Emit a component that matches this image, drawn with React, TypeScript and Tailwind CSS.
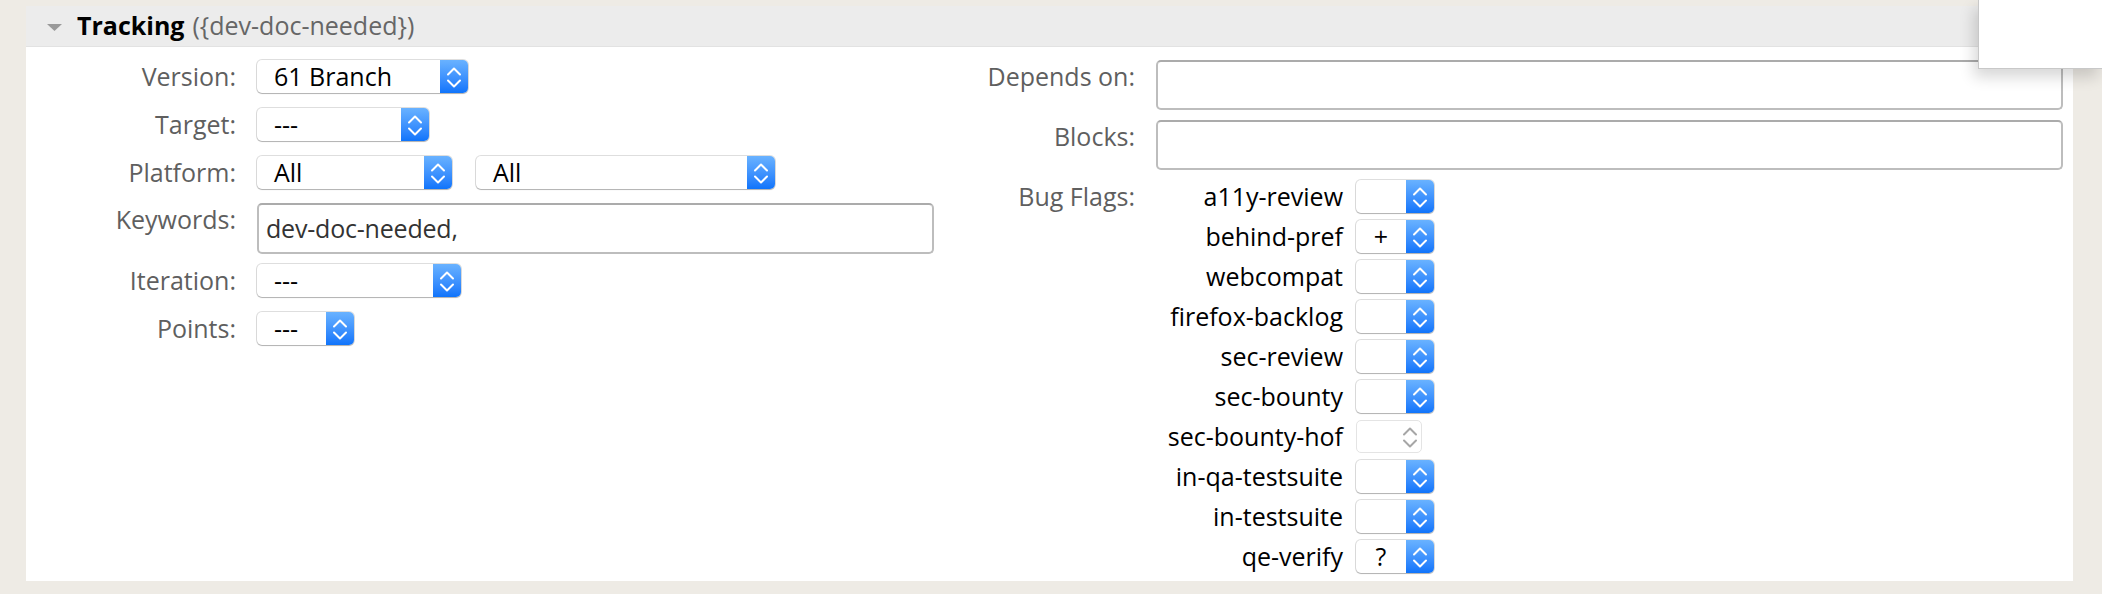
import clsx from "clsx";

type Flag = { name: string; value?: string; disabled?: boolean };

const bugFlags: Flag[] = [
  { name: "a11y-review" },
  { name: "behind-pref", value: "+" },
  { name: "webcompat" },
  { name: "firefox-backlog" },
  { name: "sec-review" },
  { name: "sec-bounty" },
  { name: "sec-bounty-hof", disabled: true },
  { name: "in-qa-testsuite" },
  { name: "in-testsuite" },
  { name: "qe-verify", value: "?" },
];

function Arrows({ className }: { className?: string }) {
  return (
    <svg
      viewBox="0 0 16 33"
      width="16"
      height="33"
      fill="none"
      stroke="currentColor"
      strokeWidth="2"
      strokeLinecap="round"
      strokeLinejoin="round"
      className={className}
    >
      <path d="M2 14.5l6-6 6 6" />
      <path d="M2 20.5l6 6 6-6" />
    </svg>
  );
}

function Select({
  value = "",
  className,
  center,
  disabled,
}: {
  value?: string;
  className?: string;
  center?: boolean;
  disabled?: boolean;
}) {
  if (disabled) {
    return (
      <div
        className={clsx(
          "flex h-[33px] items-center justify-end rounded-[5px] border border-[#e4e4e4] bg-white pr-[3px]",
          className
        )}
      >
        <Arrows className="text-[#a6a6a6]" />
      </div>
    );
  }

  return (
    <div
      className={clsx(
        "flex h-[33px] rounded-[5px] bg-white shadow-[0_0_0_1px_rgba(0,0,0,0.13),0_1px_1px_rgba(0,0,0,0.2)]",
        className
      )}
    >
      <span
        className={clsx(
          "flex-1 truncate leading-[33px] text-black",
          center ? "text-center" : "pl-[17px]"
        )}
      >
        {value}
      </span>
      <span className="flex w-[28px] shrink-0 items-center justify-center rounded-r-[5px] bg-linear-to-b from-[#69b2ff] to-[#0e74fb] text-white">
        <Arrows />
      </span>
    </div>
  );
}

function TextBox({ value, className }: { value?: string; className?: string }) {
  return (
    <div
      className={clsx(
        "flex items-center rounded-[5px] border-2 border-[#bdbdbd] border-t-[#ababab] bg-white px-[7px] tracking-[-0.2px] text-[#333]",
        className
      )}
    >
      {value}
    </div>
  );
}

function Label({ children, className }: { children: string; className?: string }) {
  return (
    <div className={clsx("shrink-0 text-right leading-[33px] text-[#5f5f5f]", className)}>
      {children}
    </div>
  );
}

export default function App() {
  return (
    <div className="relative h-[594px] overflow-hidden bg-[#eeebe5] pt-[6px] pr-[29px] pb-[13px] pl-[26px] font-['Open_Sans',sans-serif] text-[25px] font-medium">
      <div className="flex h-full flex-col bg-white">
        {/* section header */}
        <div className="flex h-[41px] shrink-0 items-center border-b border-[#e2e2e2] bg-[#ececec] pl-[21px]">
          <svg width="15" height="7" viewBox="0 0 15 7" className="mr-[15px] mt-[2px]">
            <polygon points="0,0 15,0 7.5,7" fill="#9a9a9a" />
          </svg>
          <span className="font-bold text-black">Tracking</span>
          <span className="ml-[8px] text-[#666]">({"{"}dev-doc-needed{"}"})</span>
        </div>

        <div className="flex flex-1 pt-[13px] pr-[10px]">
          {/* left column */}
          <div className="flex w-[924px] shrink-0 flex-col">
            <div className="flex gap-[21px]">
              <Label className="w-[210px]">Version:</Label>
              <Select value="61 Branch" className="w-[211px]" />
            </div>
            <div className="mt-[15px] flex gap-[21px]">
              <Label className="w-[210px]">Target:</Label>
              <Select value="---" className="w-[172px]" />
            </div>
            <div className="mt-[15px] flex gap-[21px]">
              <Label className="w-[210px]">Platform:</Label>
              <div className="flex gap-[24px]">
                <Select value="All" className="w-[195px]" />
                <Select value="All" className="w-[299px]" />
              </div>
            </div>
            <div className="mt-[14px] flex gap-[21px]">
              <Label className="w-[210px]">Keywords:</Label>
              <TextBox value="dev-doc-needed," className="h-[51px] w-[677px]" />
            </div>
            <div className="mt-[10px] flex gap-[21px]">
              <Label className="w-[210px]">Iteration:</Label>
              <Select value="---" className="w-[204px]" />
            </div>
            <div className="mt-[15px] flex gap-[21px]">
              <Label className="w-[210px]">Points:</Label>
              <Select value="---" className="w-[97px]" />
            </div>
          </div>

          {/* right column */}
          <div className="flex flex-1 flex-col">
            <div className="flex gap-[21px]">
              <Label className="w-[185px]">Depends on:</Label>
              <TextBox className="h-[50px] flex-1" />
            </div>
            <div className="mt-[10px] flex gap-[21px]">
              <Label className="w-[185px]">Blocks:</Label>
              <TextBox className="h-[50px] flex-1" />
            </div>
            <div className="mt-[10px] flex gap-[21px]">
              <Label className="w-[185px]">Bug Flags:</Label>
              <div className="grid grid-cols-[187px_auto] gap-x-[13px] gap-y-[7px]">
                {bugFlags.map((flag) => (
                  <div key={flag.name} className="contents">
                    <div className="text-right leading-[33px] text-black">{flag.name}</div>
                    <Select
                      value={flag.value}
                      center
                      disabled={flag.disabled}
                      className={flag.disabled ? "w-[66px]" : "w-[78px]"}
                    />
                  </div>
                ))}
              </div>
            </div>
          </div>
        </div>
      </div>

      {/* corner popup */}
      <div className="absolute top-0 right-0 h-[69px] w-[124px] border-b border-l border-[#c8c8c8] bg-white shadow-[-4px_8px_14px_rgba(0,0,0,0.16)]" />
    </div>
  );
}
